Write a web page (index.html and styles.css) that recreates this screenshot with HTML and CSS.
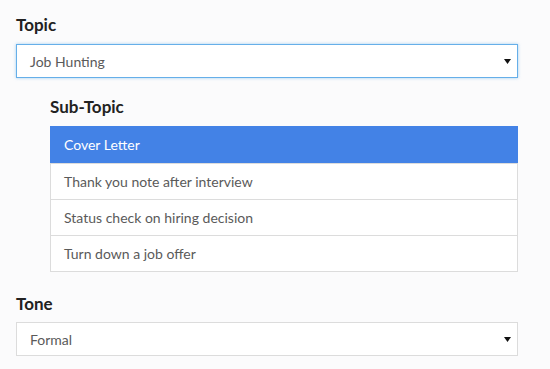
FILE: index.html
```html
<!DOCTYPE html>
<html lang="en">
<head>
    <meta charset="UTF-8">
    <meta name="viewport" content="width=device-width, initial-scale=1.0">
    <title>Letter Builder</title>
    <link rel="stylesheet" href="styles.css">
</head>
<body>

<div class="container">
    <div class="field">
        <h2 class="label">Topic</h2>
        <div class="select focused">
            <span class="select-text">Job Hunting</span>
            <svg class="arrow" width="7" height="5" viewBox="0 0 7 5"><path d="M0 0H7L3.5 5Z" fill="#111"/></svg>
        </div>
    </div>

    <div class="field sub">
        <h2 class="label">Sub-Topic</h2>
        <ul class="list">
            <li class="item active">Cover Letter</li>
            <li class="item">Thank you note after interview</li>
            <li class="item">Status check on hiring decision</li>
            <li class="item">Turn down a job offer</li>
        </ul>
    </div>

    <div class="field tone">
        <h2 class="label">Tone</h2>
        <div class="select">
            <span class="select-text">Formal</span>
            <svg class="arrow" width="7" height="5" viewBox="0 0 7 5"><path d="M0 0H7L3.5 5Z" fill="#111"/></svg>
        </div>
    </div>
</div>

</body>
</html>
```

FILE: styles.css
```css
body {
    margin: 0;
    background-color: #fbfbfc;
    font-family: Lato, "Open Sans", sans-serif;
    color: #5a5a5a;
}

.container {
    width: 502px;
    padding: 14px 0 0 16px;
}

.label {
    margin: 0 0 8px 0;
    font-size: 17px;
    line-height: 22px;
    font-weight: bold;
    color: #222;
}

.select {
    display: flex;
    align-items: center;
    justify-content: space-between;
    box-sizing: border-box;
    height: 34px;
    padding: 0 6px 0 13px;
    background-color: #fff;
    border: 1px solid #dcdcdc;
    font-size: 14px;
}

.select.focused {
    border-color: #66afe9;
    box-shadow: 0 0 3px rgba(102, 175, 233, 0.6);
}

.arrow {
    display: block;
}

.sub {
    margin: 18px 0 0 34px;
}

.list {
    list-style: none;
    margin: 0;
    padding: 0;
    background-color: #fff;
    border: 1px solid #dcdcdc;
    border-top: none;
}

.item {
    height: 35px;
    line-height: 35px;
    padding-left: 13px;
    font-size: 14px;
    border-top: 1px solid #dcdcdc;
}

.item.active {
    height: 36px;
    line-height: 36px;
    background-color: #4382e6;
    border-top-color: #4382e6;
    color: #fff;
    margin: 0 -1px;
    padding-left: 14px;
}

.tone {
    margin-top: 21px;
}

.tone .label {
    margin-bottom: 7px;
}
```
